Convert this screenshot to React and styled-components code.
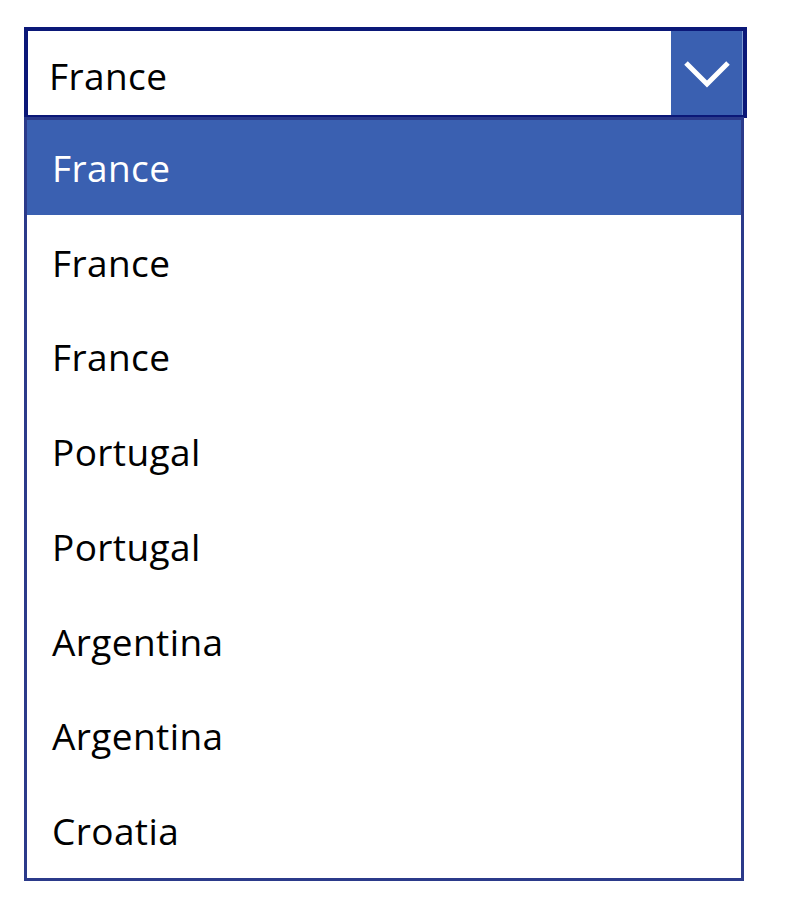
import styled, { createGlobalStyle } from "styled-components";

const GlobalStyle = createGlobalStyle`
  body {
    margin: 0;
    background: #ffffff;
    font-family: "Open Sans", "Noto Sans", sans-serif;
  }
`;

const Wrapper = styled.div`
  padding: 27px 0 0 24px;
  width: 723px;
`;

const Field = styled.div`
  box-sizing: border-box;
  width: 723px;
  height: 91px;
  display: flex;
  align-items: stretch;
  border: 4px solid #0b1878;
  border-bottom-width: 3px;
  background: #ffffff;
  .value {
    flex: 1;
    display: flex;
    align-items: center;
    padding-left: 21px;
    padding-top: 4px;
    font-size: 37px;
    letter-spacing: 0.4px;
    color: #000000;
  }
`;

const ChevronButton = styled.div`
  width: 71px;
  display: flex;
  align-items: center;
  justify-content: center;
  background: #3a60b1;
  border-right: 1px solid #7f9bd3;
  svg {
    margin-top: 2px;
  }
`;

const List = styled.div`
  box-sizing: border-box;
  width: 720px;
  margin-top: -1px;
  border: 3px solid #2b3a8a;
  background: #ffffff;
`;

const Item = styled.div`
  height: 94.75px;
  display: flex;
  align-items: center;
  padding-left: 25px;
  font-size: 37px;
  letter-spacing: 0.4px;
  color: ${(p) => (p.$selected ? "#ffffff" : "#000000")};
  background: ${(p) => (p.$selected ? "#3a60b1" : "transparent")};
`;

const items = [
  "France",
  "France",
  "France",
  "Portugal",
  "Portugal",
  "Argentina",
  "Argentina",
  "Croatia",
];

const App = () => {
  return (
    <>
      <GlobalStyle />
      <Wrapper>
        <Field>
          <div className="value">France</div>
          <ChevronButton>
            <svg width="46" height="28" viewBox="0 0 46 28">
              <path d="M2 3 L23 24 L44 3" fill="none" stroke="#ffffff" strokeWidth="5" />
            </svg>
          </ChevronButton>
        </Field>
        <List>
          {items.map((name, i) => (
            <Item key={i} $selected={i === 0}>
              {name}
            </Item>
          ))}
        </List>
      </Wrapper>
    </>
  );
};

export default App;
